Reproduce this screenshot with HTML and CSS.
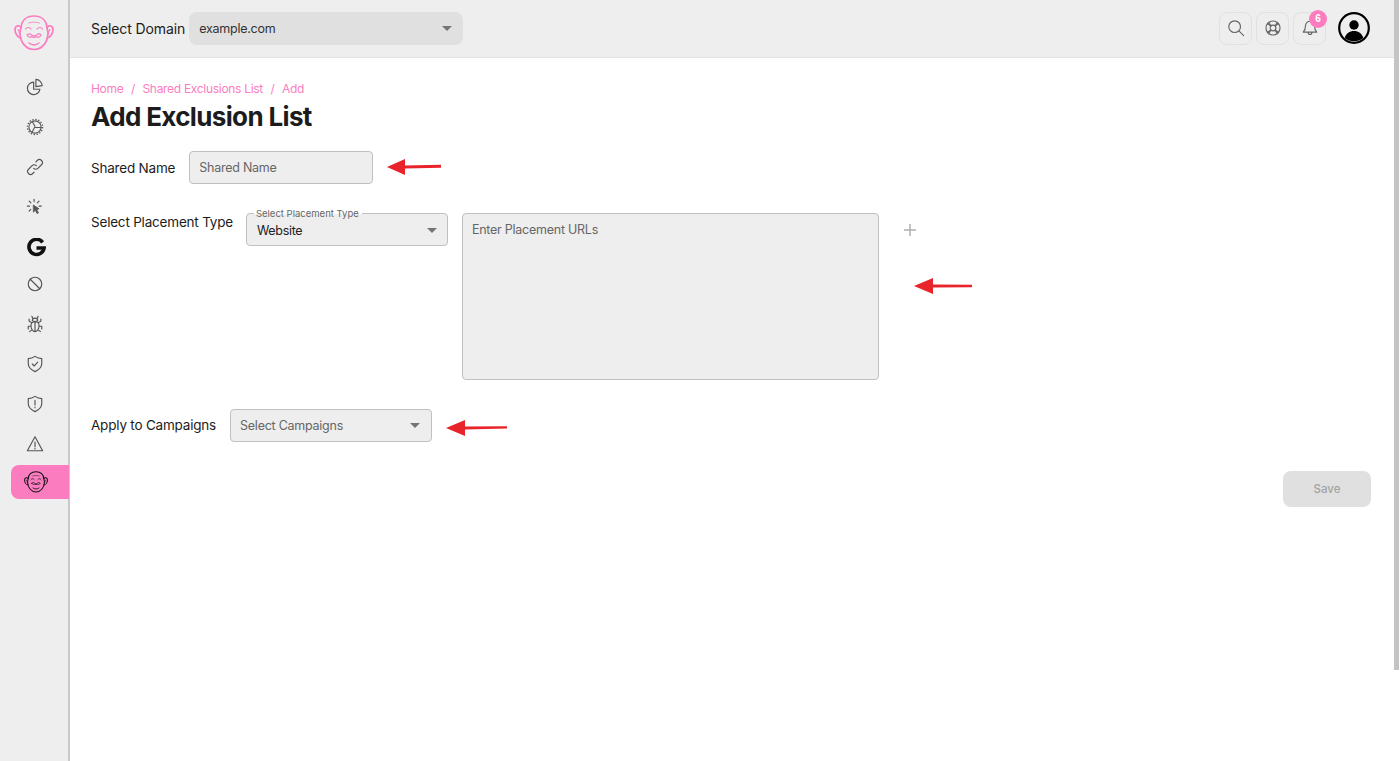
FILE: index.html
```html
<!DOCTYPE html>
<html lang="en">
<head>
<meta charset="utf-8">
<title>Add Exclusion List</title>
<link rel="stylesheet" href="styles.css">
</head>
<body>
<svg class="defs" width="0" height="0">
  <symbol id="face" viewBox="0 0 40 36">
    <g fill="none" stroke="currentColor" stroke-width="1.7" stroke-linecap="round" stroke-linejoin="round">
      <path d="M7 13C7.500 5.500 12.500 1 20 1s12.500 4.500 13 12c.5 2 1 3 1 5 0 9-6 16.500-14 16.500S6 27 6 18c0-2 .5-3 1-5z"/>
      <path d="M7 12.500C4.500 9.500 1 11 1 14.500c0 4 2.500 8 6 8.500M33 12.500c2.500-3 6-1.500 6 2 0 4-2.500 8-6 8.500"/>
      <path d="M4 14.500c1 1 1.500 2.500 1.500 4M36 14.500c-1 1-1.500 2.500-1.500 4" stroke-width="1.100"/>
      <path d="M11.500 14c1.500-2 4-2 5.500 0M23 14c1.500-2 4-2 5.500 0" stroke-width="1.200"/>
      <path d="M14.500 8c3.500-1.200 7.500-1.200 11 0" stroke-width=".8"/>
      <path d="M13 20c1.500-1.500 3-1.500 4.500 0 1.500 1 3.500 1 5 0 1.500-1.500 3-1.500 4.500 0-1.300 2.500-3 2.500-4.500 1.700-1.500.8-3.500.8-5 0-1.500.8-3.200.8-4.500-1.700z" stroke-width="1.200"/>
      <path d="M15 28c3 2.300 7 2.300 10 0" stroke-width="1.400"/>
    </g>
  </symbol>
</svg>
<div class="app">
  <aside class="sidebar">
    <div class="logo"><svg class="logo-face" width="40" height="36"><use href="#face"/></svg></div>
    <nav class="nav">
      <a class="nav-item"><svg viewBox="0 0 20 20" width="18" height="18" class="ico"><path d="M8.500 4.500a7 7 0 1 0 7 8h-7z"/><path d="M11 1.500a7.500 7.500 0 0 1 7 7l-7 1z" /></svg></a>
      <a class="nav-item"><svg viewBox="0 0 20 20" width="18" height="18" class="ico"><circle cx="10" cy="10" r="6.800" stroke-width="1.200"/><path d="M10 9.500 7 4M10.500 10.500h6.300M9.500 10.500 6.500 16" stroke-width="1.200"/><circle cx="10" cy="10" r="8.400" stroke-dasharray="1.500 1.800" stroke-width="1.500" stroke-linecap="butt"/></svg></a>
      <a class="nav-item"><svg viewBox="0 0 20 20" width="18" height="18" class="ico"><path d="M8.500 11.500a3.300 3.300 0 0 0 4.700 0l4-4a3.300 3.300 0 0 0-4.700-4.700l-1.500 1.500"/><path d="M11.500 8.500a3.300 3.300 0 0 0-4.700 0l-4 4a3.300 3.300 0 0 0 4.700 4.700l1.500-1.500"/></svg></a>
      <a class="nav-item"><svg viewBox="0 0 20 20" width="18" height="18" class="ico"><path d="M9 1.500V4M3.500 3.500l2 2M1.500 9H4M3.500 14.500l1.800-1.800M14.500 3.500l-2 2M17 9h-2.500"/><path d="M8.500 8l6 4-2.700.8 2 3.700-1.400.8-2-3.700-1.900 1.800z" fill="#555" stroke-width="1"/></svg></a>
      <a class="nav-item nav-g"><svg viewBox="0 0 20 20" width="19" height="19"><path class="g-mark" d="M16.500 4.600A8 8 0 1 0 18 10.500H10"/></svg></a>
      <a class="nav-item"><svg viewBox="0 0 20 20" width="18" height="18" class="ico"><circle cx="10" cy="10" r="7.500"/><path d="M4.700 4.700l10.600 10.600"/></svg></a>
      <a class="nav-item"><svg viewBox="0 0 20 20" width="18" height="20" class="ico"><path d="M7 6.500C7 4.500 8.300 3.500 10 3.500s3 1 3 3c-1.800 1-4.200 1-6 0zM7.500 3.500 6.500 1.500M12.500 3.500l1-2"/><path d="M5.500 12c0-3 2-4.500 4.500-4.500s4.500 1.500 4.500 4.500-2 6.500-4.500 6.500-4.500-3.500-4.500-6.500zM10 8v10.500M6.500 8.500 3.500 7V4.500M13.500 8.500l3-1.500V4.500M5.500 12.500H2.500v3M14.500 12.500h3v3M6.500 16.500 4 18.500M13.500 16.500l2.500 2"/></svg></a>
      <a class="nav-item"><svg viewBox="0 0 20 20" width="18" height="18" class="ico"><path d="M10 1.500c2.500 1.800 4.800 2.500 7.500 2.500v5.500c0 4-3 7-7.500 9-4.500-2-7.500-5-7.500-9V4c2.700 0 5-.7 7.500-2.500z"/><path d="M7 10l2.200 2.200L13 8"/></svg></a>
      <a class="nav-item"><svg viewBox="0 0 20 20" width="18" height="18" class="ico"><path d="M10 1.500c2.500 1.800 4.800 2.500 7.500 2.500v5.500c0 4-3 7-7.500 9-4.500-2-7.500-5-7.500-9V4c2.700 0 5-.7 7.500-2.500z"/><path d="M10 6v5M10 13.300v1"/></svg></a>
      <a class="nav-item"><svg viewBox="0 0 20 20" width="18" height="18" class="ico"><path d="M10 2 1.500 17.500h17z"/><path d="M10 8v5M10 14.800v.7"/></svg></a>
      <a class="nav-item nav-active"><svg class="active-face" width="24" height="22"><use href="#face"/></svg></a>
    </nav>
  </aside>
  <div class="main">
    <header class="topbar">
      <div class="domain">
        <span class="domain-label">Select Domain</span>
        <div class="domain-select"><span>example.com</span><i class="caret"></i></div>
      </div>
      <div class="actions">
        <button class="icon-btn"><svg viewBox="0 0 20 20" width="18" height="18" class="ico-light"><circle cx="8.500" cy="8.500" r="6.500"/><path d="M13.500 13.500l5 5"/></svg></button>
        <button class="icon-btn"><svg viewBox="0 0 20 20" width="18" height="18" class="ico-light"><circle cx="10" cy="10" r="7.800"/><circle cx="10" cy="10" r="3.200"/><path d="M5 3.800l2.800 3.800M15 3.800l-2.800 3.800M5 16.200l2.800-3.800M15 16.200l-2.800-3.800M3.800 5l3.800 2.800M16.200 5l-3.800 2.800M3.800 15l3.800-2.800M16.200 15l-3.800-2.800"/></svg></button>
        <button class="icon-btn"><svg viewBox="0 0 20 20" width="18" height="18" class="ico-light"><path d="M10 2.500a5 5 0 0 1 5 5c0 4 1 5.500 2.500 7h-15C4 13 5 11.500 5 7.500a5 5 0 0 1 5-5zM8 15c0 3 4 3 4 0"/></svg><span class="badge">6</span></button>
        <div class="avatar">
          <svg viewBox="0 0 32 32" width="32" height="32"><circle cx="16" cy="16" r="14.800" fill="#eee" stroke="#000" stroke-width="2.200"/><circle cx="16" cy="13" r="4.700" fill="#000"/><path d="M6.700 26c1.300-4.700 5-7 9.300-7s8 2.300 9.300 7a14.800 14.800 0 0 1-18.600 0z" fill="#000"/></svg>
        </div>
      </div>
    </header>
    <main class="content">
      <ol class="crumbs">
        <li>Home</li><li class="sep">/</li><li>Shared Exclusions List</li><li class="sep">/</li><li>Add</li>
      </ol>
      <h1 class="title">Add Exclusion List</h1>
      <div class="row row-name">
        <label class="label">Shared Name</label>
        <input class="field input-name" placeholder="Shared Name">
      </div>
      <div class="row row-placement">
        <label class="label label-top">Select Placement Type</label>
        <div class="field select-type">
          <span class="legend">Select Placement Type</span>
          <span class="value">Website</span><i class="caret"></i>
        </div>
        <textarea class="field urls" placeholder="Enter Placement URLs"></textarea>
        <svg class="plus" viewBox="0 0 12 12" width="12" height="12"><path d="M6 0v12M0 6h12"/></svg>
      </div>
      <div class="row row-campaign">
        <label class="label label-camp">Apply to Campaigns</label>
        <div class="field select-camp"><span class="placeholder">Select Campaigns</span><i class="caret"></i></div>
      </div>
      <div class="footer-row"><button class="save">Save</button></div>
    </main>
  </div>
</div>
<svg class="arrow arrow-a" width="55" height="20" viewBox="0 0 55 20"><path d="M0 10 18 2v6.500l36-.8v3L18 11.500V18z"/></svg>
<svg class="arrow arrow-b" width="58" height="20" viewBox="0 0 58 20"><path d="M0 10 19 2v6.500l39 .3v2.400L19 11.500V18z"/></svg>
<svg class="arrow arrow-c" width="62" height="20" viewBox="0 0 62 20"><path d="M0 10 19 2v6.500l42-.3v2.400L19 11.500V18z"/></svg>
<div class="scroll-thumb"></div>
</body>
</html>
```
FILE: styles.css
```css
* { box-sizing: border-box; }
html, body { margin: 0; height: 100%; overflow: hidden; background: #fff; }
body { font-family: "Inter", "Noto Sans", sans-serif; color: #1c1c1c; }
.defs { position: absolute; }
.app { display: flex; height: 761px; }

.sidebar { width: 70px; flex: none; background: #eee; border-right: 2px solid #c9c9c9; }
.logo { height: 67px; display: flex; align-items: center; justify-content: center; padding-bottom: 1px; color: #fb7dc0; }
.logo-face { display: block; }
.nav { display: flex; flex-direction: column; }
.nav-item { height: 40px; padding-left: 1px; display: flex; align-items: center; justify-content: center; }
.nav-g { height: 37px; padding-top: 3px; padding-left: 4px; }
.nav-active { height: 34px; margin-top: 1px; margin-left: 11px; margin-right: -1px; padding-right: 9px; background: #fb7dc0; border-radius: 8px 0 0 8px; color: #111; }
.ico { fill: none; stroke: #555; stroke-width: 1.300; stroke-linecap: round; stroke-linejoin: round; }
.g-mark { fill: none; stroke: #111; stroke-width: 3.800; }

.main { flex: 1; min-width: 0; display: flex; flex-direction: column; }
.topbar { height: 58px; flex: none; background: #eee; border-bottom: 1px solid #e2e2e2; margin-right: 6px; padding: 0 24px 0 21px; display: flex; align-items: center; justify-content: space-between; }
.domain { display: flex; align-items: center; gap: 4px; margin-bottom: 1px; }
.domain-label { font-size: 14px; letter-spacing: -0.100px; white-space: nowrap; }
.domain-select { width: 274px; height: 33px; background: #e0e0e0; border-radius: 8px; padding: 0 11px 0 10px; display: flex; align-items: center; justify-content: space-between; font-size: 12.500px; letter-spacing: -0.250px; color: #333; }
.caret { width: 0; height: 0; border-left: 5px solid transparent; border-right: 5px solid transparent; border-top: 5px solid #757575; flex: none; }

.actions { display: flex; align-items: center; gap: 4px; margin-bottom: 1px; }
.icon-btn { position: relative; width: 33px; height: 33px; padding: 0; background: #eee; border: 1px solid #e1e1e1; border-radius: 8px; display: flex; align-items: center; justify-content: center; }
.ico-light { fill: none; stroke: #666; stroke-width: 1.300; stroke-linecap: round; stroke-linejoin: round; }
.badge { position: absolute; top: -3px; right: -2px; width: 18px; height: 18px; border-radius: 50%; background: #fb7dc0; color: #fff; font-size: 10px; font-weight: 600; line-height: 18px; text-align: center; }
.avatar { margin-left: 8px; width: 32px; height: 32px; }
.avatar svg { display: block; }

.content { flex: 1; padding: 23px 29px 0 21px; }
.crumbs { list-style: none; margin: 0; padding: 0; display: flex; gap: 7.500px; font-size: 12px; letter-spacing: -0.300px; line-height: 16px; color: #fb7dc0; }
.title { margin: 4px 0 0; font-size: 26px; line-height: 32px; font-weight: 700; letter-spacing: -0.650px; color: #1c1c1c; }
.row { display: flex; align-items: center; }
.label { font-size: 13.500px; letter-spacing: -0.200px; white-space: nowrap; color: #1c1c1c; }
.field { background: #eee; border: 1px solid #c0c0c0; border-radius: 4px; font-family: inherit; font-size: 12.500px; letter-spacing: -0.250px; color: #333; outline: none; }
.field::placeholder { color: #666; opacity: 1; }
.row-name { margin-top: 18px; gap: 14px; }
.input-name { width: 184px; height: 33px; padding: 0 9px; }
.row-placement { margin-top: 29px; align-items: flex-start; position: relative; }
.label-top { margin-top: 1px; line-height: 16px; }
.select-type { position: relative; width: 202px; height: 33px; margin-left: 13px; padding: 1px 10px 0; display: flex; align-items: center; justify-content: space-between; }
.legend { position: absolute; top: -6px; left: 7px; padding: 0 3px 0 2px; font-size: 9.500px; letter-spacing: 0; line-height: 12px; color: #666; background: linear-gradient(#fff 50%, #eee 50%); white-space: nowrap; }
.value { font-size: 12.500px; letter-spacing: -0.300px; color: #222; }
.urls { display: block; width: 417px; height: 167px; margin-left: 14px; padding: 8px 9px; resize: none; line-height: 16px; }
.plus { margin: 11px 0 0 25px; fill: none; stroke: #b0b0b0; stroke-width: 1.500; }
.row-campaign { margin-top: 29px; gap: 14px; }
.label-camp { margin-bottom: 1px; }
.select-camp { width: 202px; height: 33px; padding: 0 11px 0 9px; display: flex; align-items: center; justify-content: space-between; }
.placeholder { color: #666; }
.footer-row { display: flex; justify-content: flex-end; margin-top: 29px; }
.save { width: 88px; height: 36px; border: none; border-radius: 8px; background: #e0e0e0; color: #a3a3a3; font-family: inherit; font-size: 11.500px; font-weight: 500; }

.arrow { position: absolute; fill: #e8232a; }
.arrow-a { left: 387px; top: 157px; }
.arrow-b { left: 914px; top: 276px; }
.arrow-c { left: 446px; top: 418px; }
.scroll-thumb { position: absolute; top: 0; right: 1px; width: 5px; height: 670px; background: #c4c4c4; }
```
